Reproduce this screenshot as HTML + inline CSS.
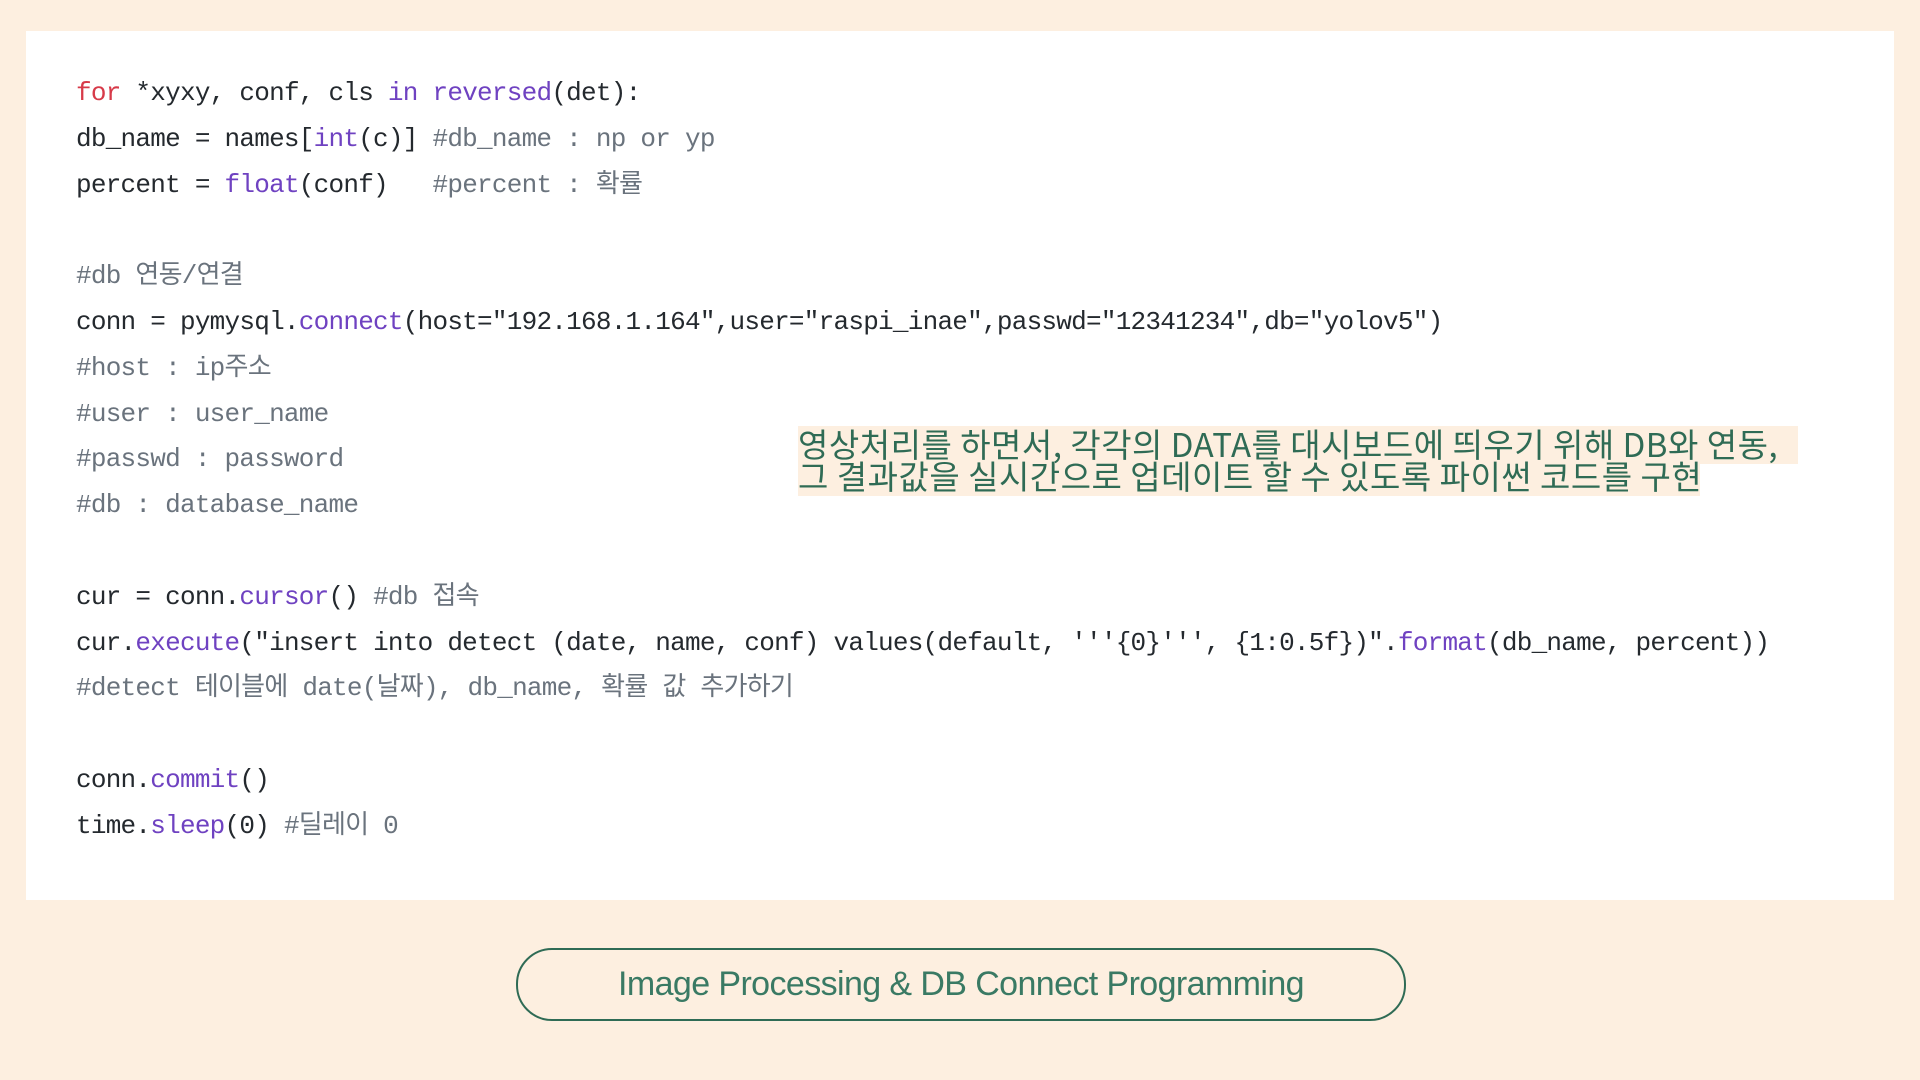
<!DOCTYPE html>
<html><head><meta charset="utf-8"><style>
html,body{margin:0;padding:0}
body{width:1920px;height:1080px;background:#fdefe0;position:relative;overflow:hidden;font-family:"Liberation Sans","Noto Sans CJK KR",sans-serif}
.panel{position:absolute;left:26px;top:31px;width:1868px;height:869px;background:#fff}
.code{position:absolute;left:76px;top:71px;font-family:"Liberation Mono","Noto Sans CJK KR",monospace;font-size:26px;letter-spacing:-0.75px;line-height:45.8px;color:#24292e;white-space:pre}
.k{color:#d73a49}.f{color:#6f42c1}.c{color:#6a737d}
.bg{position:absolute;background:#fdefe0}
.note{position:absolute;left:798px;top:427px;font-family:"Noto Sans CJK KR",sans-serif;font-size:33px;line-height:32px;color:#2f6b55;letter-spacing:0.5px;white-space:nowrap}
.btn{position:absolute;left:516px;top:948px;width:886px;height:69px;border:2px solid #2f6b55;border-radius:36px;display:flex;align-items:center;justify-content:center;color:#3a7a64;font-size:34px;letter-spacing:-0.6px}
</style></head><body>
<div class="panel"></div>
<div class="code"><span class="k">for</span> *xyxy, conf, cls <span class="f">in</span> <span class="f">reversed</span>(det):
db_name = names[<span class="f">int</span>(c)] <span class="c">#db_name : np or yp</span>
percent = <span class="f">float</span>(conf)   <span class="c">#percent : 확률</span>

<span class="c">#db 연동/연결</span>
conn = pymysql.<span class="f">connect</span>(host="192.168.1.164",user="raspi_inae",passwd="12341234",db="yolov5")
<span class="c">#host : ip주소</span>
<span class="c">#user : user_name</span>
<span class="c">#passwd : password</span>
<span class="c">#db : database_name</span>

cur = conn.<span class="f">cursor</span>() <span class="c">#db 접속</span>
cur.<span class="f">execute</span>("insert into detect (date, name, conf) values(default, '''{0}''', {1:0.5f})".<span class="f">format</span>(db_name, percent))
<span class="c">#detect 테이블에 date(날짜), db_name, 확률 값 추가하기</span>

conn.<span class="f">commit</span>()
time.<span class="f">sleep</span>(0) <span class="c">#딜레이 0</span></div>
<div class="bg" style="left:798px;top:426px;width:1000px;height:38px"></div>
<div class="bg" style="left:798px;top:460px;width:902px;height:36px"></div>
<div class="note">영상처리를 하면서, 각각의 DATA를 대시보드에 띄우기 위해 DB와 연동,<br>그 결과값을 실시간으로 업데이트 할 수 있도록 파이썬 코드를 구현</div>
<div class="btn">Image Processing &amp; DB Connect Programming</div>
</body></html>
